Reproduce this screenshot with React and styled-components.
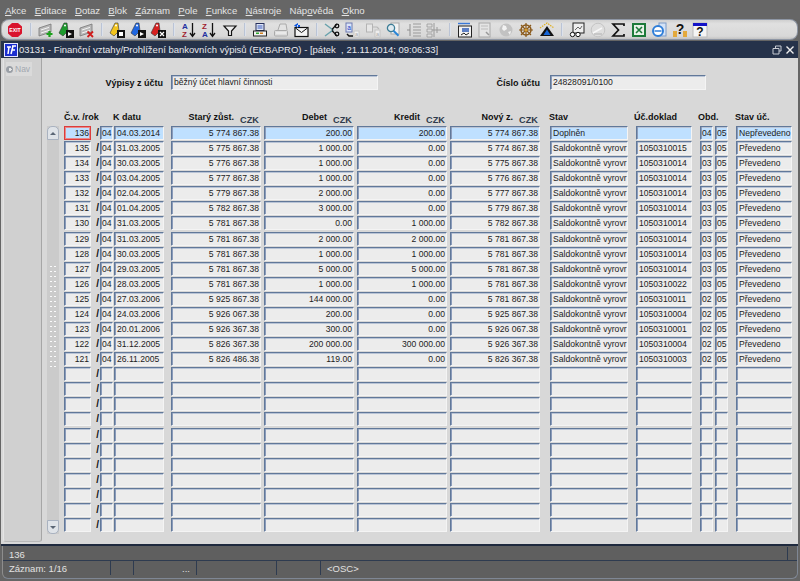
import React from 'react';
import styled, { createGlobalStyle } from 'styled-components';

const Global = createGlobalStyle`
html, body { margin: 0; padding: 0; background: #656565; }
* { box-sizing: border-box; }
`;

const Page = styled.div`
width: 800px;
height: 581px;
overflow: hidden;
display: flex;
flex-direction: column;
font-family: 'Liberation Sans', Arial, sans-serif;
background: #656565;
`;

const MenuBar = styled.div`
height: 19px;
flex: none;
display: flex;
align-items: center;
padding: 1px 0 0 5px;
gap: 8.3px;
font-size: 9.6px;
color: #e4e4e4;
background: #666;
u { text-decoration-thickness: 1px; }
`;

const Toolbar = styled.div`
height: 21px;
flex: none;
margin: 0 2px 0 1px;
padding-left: 3px;
display: flex;
align-items: center;
background: linear-gradient(#cfcfcf, #e0e0e0 20%, #d8d8d8 85%, #c2c2c2);
border: 1px solid #8e96a4;
border-left-color: #aaa;
border-radius: 8px;
`;

const Slot = styled.div`
width: 20.5px;
height: 18px;
flex: none;
display: flex;
align-items: center;
justify-content: center;
`;

const Sep = styled.div`
width: 10px;
height: 13px;
flex: none;
position: relative;
&::after {
  content: '';
  position: absolute;
  left: 4px;
  top: 0;
  bottom: 0;
  width: 2px;
  background: linear-gradient(90deg, #a9b5cb, #eef1f6);
}
`;

const Window = styled.div`
height: 505px;
flex: none;
margin: 1px 2px 0 1px;
display: flex;
flex-direction: column;
background: #d8d8d8;
border-bottom: 2px solid #1f2a3e;
`;

const TitleBar = styled.div`
height: 17px;
flex: none;
display: flex;
align-items: center;
padding: 0 2px 0 3px;
color: #e8e8ec;
font-size: 9.5px;
background: #25324a;
`;

const TitleText = styled.span`
margin-left: 1px;
flex: 1;
white-space: pre;
`;

const WinBtn = styled.span`
width: 12px;
height: 12px;
display: flex;
align-items: center;
justify-content: center;
margin-left: 1px;
`;

const Body = styled.div`
flex: 1;
display: flex;
min-height: 0;
`;

const NavPanel = styled.div`
width: 39px;
flex: none;
margin: 0 0 2px 2px;
padding: 4px 0 0 2px;
background: #d0d0d0;
border-right: 1px solid #a6a6a6;
border-bottom: 1px solid #b8b8b8;
border-left: 1px solid #e4e4e4;
border-radius: 0 0 3px 3px;
`;

const NavTab = styled.div`
width: 26px;
height: 14px;
display: flex;
align-items: center;
gap: 2px;
font-size: 8.5px;
color: #a2a8b0;
background: #dadada;
`;

const NavDot = styled.span`
width: 7px;
height: 7px;
border-radius: 50%;
background: radial-gradient(circle at 60% 50%, #e6e6e6 25%, #9a9fa6 30%);
`;

const Main = styled.div`
flex: 1;
min-width: 0;
padding-top: 17px;
`;

const FormRow = styled.div`
display: flex;
align-items: center;
height: 15px;
`;

const FormLabel = styled.div`
width: ${p => p.$w}px;
flex: none;
text-align: right;
font-size: 9px;
font-weight: 700;
color: #111;
margin-right: ${p => p.$gap}px;
`;

const Field = styled.div`
height: ${p => p.$h || 14}px;
width: ${p => p.$w}px;
margin-left: ${p => p.$ml || 0}px;
flex: none;
overflow: hidden;
white-space: nowrap;
padding: 1px ${p => (p.$right ? 1 : 0)}px 0 ${p => (p.$tight ? 1 : 2)}px;
line-height: 11px;
font-size: 8.6px;
color: #1c1c1c;
text-align: ${p => (p.$right ? 'right' : 'left')};
background: ${p => (p.$active ? '#bfe0ff' : '#ececec')};
border-style: solid;
border-width: 1px;
border-color: ${p => (p.$focus ? '#dc3c3c' : '#617899 #f4f4f4 #f4f4f4 #617899')};
box-shadow: ${p => (p.$focus ? 'inset 0 0 0 1px #e88a8a' : 'inset 1px 0 #8a9bba, inset 0 1px #b9c4d6')};
`;

const TableArea = styled.div`
display: flex;
margin: 20px 0 0 5px;
`;

const Scroller = styled.div`
width: 12px;
flex: none;
margin-top: 16px;
height: 408px;
display: flex;
flex-direction: column;
background: #cbcbcb;
`;

const ScrollBtn = styled.div`
height: 14px;
flex: none;
display: flex;
align-items: center;
justify-content: center;
background: #dfe3e8;
border: 1px solid #a9b2c0;
border-radius: ${p => (p.$down ? '0 0 5px 5px' : '5px 5px 0 0')};
&::after {
  content: '';
  border-left: 3px solid transparent;
  border-right: 3px solid transparent;
  ${p => (p.$down ? 'border-top: 3px solid #5b6675;' : 'border-bottom: 3px solid #5b6675;')}
}
`;

const Thumb = styled.div`
flex: 1;
position: relative;
`;

const Grip = styled.div`
position: absolute;
left: 2px;
right: 2px;
top: 124px;
height: 106px;
background-image: radial-gradient(circle, #fafafa 0.8px, transparent 1px);
background-size: 4px 5px;
`;

const Table = styled.div`
margin-left: 5px;
`;

const HeadRow = styled.div`
display: flex;
height: 16px;
`;

const Head = styled.div`
width: ${p => p.$w}px;
margin-left: ${p => p.$ml || 0}px;
flex: none;
display: flex;
justify-content: ${p => (p.$money ? 'flex-end' : 'flex-start')};
gap: 6px;
padding-right: ${p => (p.$money ? 1 : 0)}px;
font-size: 9px;
font-weight: 700;
color: #111;
white-space: nowrap;
line-height: 12px;
padding-top: 1px;
`;

const Czk = styled.span`
color: #2f3b4c;
padding-top: 3px;
font-size: 9.2px;
`;

const Rows = styled.div`
display: flex;
flex-direction: column;
gap: 1.08px;
`;

const Row = styled.div`
display: flex;
height: 14px;
`;

const Slash = styled.div`
width: 9px;
flex: none;
text-align: right;
padding-right: 1px;
font-size: 10px;
line-height: 13px;
font-weight: 700;
color: #111;
`;

const StatusBar = styled.div`
height: 33px;
flex: none;
margin: 0 2px 3px 2px;
border: 1px solid #7f8794;
border-top: none;
border-radius: 0 0 6px 6px;
border-left-color: #8d8d8d;
background: #5f5f5f;
color: #e2e2e2;
font-size: 9.5px;
display: flex;
flex-direction: column;
`;

const StatusTop = styled.div`
height: 15px;
padding: 2px 0 0 6px;
line-height: 13px;
position: relative;
border-bottom: 1px solid #2e3b50;
&::after {
  content: '';
  position: absolute;
  right: 9px;
  top: 1px;
  bottom: 0;
  width: 1px;
  background: #2e3b50;
}
`;

const StatusBottom = styled.div`
display: flex;
flex: 1;
`;

const Cell = styled.div`
width: ${p => p.$w}px;
flex: none;
padding-left: ${p => p.$pl || 0}px;
padding-top: 2px;
border-right: ${p => (p.$last ? 'none' : '1px solid #2e3b50')};
height: 14px;
line-height: 12px;
`;

const bank = (a, b, c, d) => [a, b, c, d];
const data = [
  ['136', '04.03.2014', ...bank('5 774 867.38', '200.00', '200.00', '5 774 867.38'), 'Doplněn', '', '04', 'Nepřevedeno'],
  ['135', '31.03.2005', ...bank('5 775 867.38', '1 000.00', '0.00', '5 774 867.38'), 'Saldokontně vyrovr', '1050310015', '03', 'Převedeno'],
  ['134', '30.03.2005', ...bank('5 776 867.38', '1 000.00', '0.00', '5 775 867.38'), 'Saldokontně vyrovr', '1050310014', '03', 'Převedeno'],
  ['133', '03.04.2005', ...bank('5 777 867.38', '1 000.00', '0.00', '5 776 867.38'), 'Saldokontně vyrovr', '1050310014', '03', 'Převedeno'],
  ['132', '02.04.2005', ...bank('5 779 867.38', '2 000.00', '0.00', '5 777 867.38'), 'Saldokontně vyrovr', '1050310014', '03', 'Převedeno'],
  ['131', '01.04.2005', ...bank('5 782 867.38', '3 000.00', '0.00', '5 779 867.38'), 'Saldokontně vyrovr', '1050310014', '03', 'Převedeno'],
  ['130', '31.03.2005', ...bank('5 781 867.38', '0.00', '1 000.00', '5 782 867.38'), 'Saldokontně vyrovr', '1050310014', '03', 'Převedeno'],
  ['129', '31.03.2005', ...bank('5 781 867.38', '2 000.00', '2 000.00', '5 781 867.38'), 'Saldokontně vyrovr', '1050310014', '03', 'Převedeno'],
  ['128', '30.03.2005', ...bank('5 781 867.38', '1 000.00', '1 000.00', '5 781 867.38'), 'Saldokontně vyrovr', '1050310014', '03', 'Převedeno'],
  ['127', '29.03.2005', ...bank('5 781 867.38', '5 000.00', '5 000.00', '5 781 867.38'), 'Saldokontně vyrovr', '1050310014', '03', 'Převedeno'],
  ['126', '28.03.2005', ...bank('5 781 867.38', '1 000.00', '1 000.00', '5 781 867.38'), 'Saldokontně vyrovr', '1050310022', '03', 'Převedeno'],
  ['125', '27.03.2006', ...bank('5 925 867.38', '144 000.00', '0.00', '5 781 867.38'), 'Saldokontně vyrovr', '1050310011', '02', 'Převedeno'],
  ['124', '24.03.2006', ...bank('5 926 067.38', '200.00', '0.00', '5 925 867.38'), 'Saldokontně vyrovr', '1050310004', '02', 'Převedeno'],
  ['123', '20.01.2006', ...bank('5 926 367.38', '300.00', '0.00', '5 926 067.38'), 'Saldokontně vyrovr', '1050310001', '02', 'Převedeno'],
  ['122', '31.12.2005', ...bank('5 826 367.38', '200 000.00', '300 000.00', '5 926 367.38'), 'Saldokontně vyrovr', '1050310004', '02', 'Převedeno'],
  ['121', '26.11.2005', ...bank('5 826 486.38', '119.00', '0.00', '5 826 367.38'), 'Saldokontně vyrovr', '1050310003', '02', 'Převedeno'],
];

const rows = [...data, ...Array.from({ length: 11 }, () => null)];

const Svg = ({ children, w = 16 }) => (
  <svg width={w} height="16" viewBox="0 0 16 16">{children}</svg>
);

const Card = ({ fill = '#b9b9b9', line = '#777' }) => (
  <>
    <polygon points="1,6 13,2 13,10 1,14" fill={fill} stroke={line} strokeWidth="0.8" />
    <path d="M3 8 L11 5.4 M3 11 L11 8.4" stroke="#f4f4f4" strokeWidth="1" />
  </>
);

const Tag = ({ fill }) => (
  <>
    <polygon points="1,11 6,1 9,1 10,9 5,14" fill={fill} stroke="#333" strokeWidth="0.6" />
    <circle cx="7" cy="3.5" r="1" fill="#fff" />
  </>
);

const BlackBox = ({ children }) => (
  <>
    <rect x="8" y="8" width="8" height="8" fill="#111" />
    {children}
  </>
);

const icons = {
  exit: (
    <Svg>
      <polygon points="5,1 11,1 15,4.5 15,11.5 11,15 5,15 1,11.5 1,4.5" fill="#d9142c" />
      <text x="8" y="10" fontSize="5.2" fontWeight="700" textAnchor="middle" fill="#fff">EXIT</text>
    </Svg>
  ),
  add: <Svg><Card /><path d="M11.5 9v6M8.5 12h6" stroke="#1ca01c" strokeWidth="2.2" /></Svg>,
  unlock: <Svg><Tag fill="#1d9a2e" /><BlackBox><path d="M10 14v-4l4 2z" fill="#fff" /></BlackBox></Svg>,
  del: <Svg><Card /><path d="M8.5 9.5l5.5 5.5M14 9.5L8.5 15" stroke="#d01c1c" strokeWidth="1.8" /></Svg>,
  yellow: <Svg><Tag fill="#f2c41e" /><BlackBox><rect x="10" y="10" width="4" height="4" fill="#fff" /></BlackBox></Svg>,
  blue: <Svg><Tag fill="#1f66e0" /><BlackBox><path d="M10 10l4 2-4 2z" fill="#fff" /></BlackBox></Svg>,
  red: <Svg><Tag fill="#d62020" /><BlackBox><path d="M10 10l4 4M14 10l-4 4" stroke="#fff" strokeWidth="1.2" /></BlackBox></Svg>,
  az: (
    <Svg>
      <text x="1" y="7" fontSize="8" fontWeight="700" fill="#2230a0">A</text>
      <text x="1" y="15" fontSize="8" fontWeight="700" fill="#a01c30">Z</text>
      <path d="M11.5 1v13M9 11l2.5 3.5 2.5-3.5" stroke="#111" strokeWidth="1.3" fill="none" />
    </Svg>
  ),
  za: (
    <Svg>
      <text x="1" y="7" fontSize="8" fontWeight="700" fill="#a01c30">Z</text>
      <text x="1" y="15" fontSize="8" fontWeight="700" fill="#2230a0">A</text>
      <path d="M11.5 1v13M9 11l2.5 3.5 2.5-3.5" stroke="#111" strokeWidth="1.3" fill="none" />
    </Svg>
  ),
  filter: <Svg><path d="M2 4h12L9.5 9v4.5h-3V9z" fill="#eee" stroke="#111" strokeWidth="1.2" /></Svg>,
  print: (
    <Svg>
      <rect x="4" y="1.5" width="8" height="7" fill="#dfe6f5" stroke="#26305e" />
      <path d="M5.5 4h5M5.5 6h5" stroke="#3a5bc0" />
      <rect x="1.5" y="9" width="13" height="5" fill="#f1f1f1" stroke="#222" />
      <rect x="4" y="10.5" width="3" height="1.5" fill="#2faa2f" />
      <rect x="8" y="10.5" width="3" height="1.5" fill="#d08020" />
    </Svg>
  ),
  printOff: (
    <Svg>
      <path d="M5 8l2-6h6l1 6" fill="#e2e2e2" stroke="#aaa" />
      <rect x="1.5" y="8.5" width="13" height="5.5" rx="1" fill="#ddd" stroke="#aaa" />
      <path d="M3 11h10" stroke="#f6f6f6" />
    </Svg>
  ),
  mail: (
    <Svg>
      <rect x="2" y="5.5" width="13" height="9" fill="#f4f4f4" stroke="#111" strokeWidth="1.2" />
      <path d="M2.5 6l6 4.5 6-4.5" fill="none" stroke="#111" />
      <path d="M5 1L1 3.5 5 6zM4 3h3v2H4z" fill="#0b55e0" />
    </Svg>
  ),
  cut: (
    <Svg>
      <path d="M1 2l8 6-8 6" fill="none" stroke="#6aa3ad" strokeWidth="1.5" />
      <path d="M13 2L8 7.5M13 14L8 8.5" stroke="#111" strokeWidth="1.2" />
      <circle cx="13" cy="4" r="1.8" fill="none" stroke="#111" strokeWidth="1.3" />
      <circle cx="13" cy="12" r="1.8" fill="none" stroke="#111" strokeWidth="1.3" />
    </Svg>
  ),
  copy: (
    <Svg>
      <rect x="2" y="1" width="6" height="9" fill="#dce4fa" stroke="#6d7ab0" />
      <text x="5" y="8" fontSize="6.5" textAnchor="middle" fill="#2038c0">a</text>
      <path d="M3 12l2 2h4" fill="none" stroke="#111" strokeWidth="1.4" />
      <rect x="10" y="9" width="5" height="6" fill="#f1f1f1" stroke="#c8c8c8" />
      <text x="12.5" y="14" fontSize="5.5" textAnchor="middle" fill="#aaa">a</text>
    </Svg>
  ),
  paste: (
    <Svg>
      <rect x="1.5" y="2" width="6" height="8" fill="#e6e6e6" stroke="#b4b4b4" />
      <path d="M8 5h4l2 2" fill="none" stroke="#b8b8b8" strokeWidth="1.2" />
      <rect x="10" y="8" width="5" height="7" fill="#eee" stroke="#c4c4c4" />
      <text x="12.5" y="14" fontSize="5.5" textAnchor="middle" fill="#aaa">a</text>
    </Svg>
  ),
  find: (
    <Svg>
      <rect x="6" y="1" width="8" height="11" fill="#f2f2f2" stroke="#aaa" />
      <circle cx="6" cy="6" r="3.6" fill="#dfeaf0" stroke="#3c7d96" strokeWidth="1.3" />
      <path d="M8.5 8.8l5 5" stroke="#2a86d8" strokeWidth="2" />
    </Svg>
  ),
  list: (
    <Svg>
      <path d="M7 2h8M7 5h8M7 8h8M7 11h8M7 14h8" stroke="#9a9a9a" strokeWidth="1.2" />
      <path d="M4 2v12M1 8h3" stroke="#8f8f8f" />
    </Svg>
  ),
  tree: (
    <Svg>
      <path d="M1 2h5v3H1zM1 7h5v3H1zM1 12h5v3H1z" fill="#dedede" stroke="#9a9a9a" strokeWidth="0.8" />
      <path d="M8 1v14M6 8h9M11 5v6" stroke="#9a9a9a" strokeWidth="1" />
    </Svg>
  ),
  save: (
    <Svg>
      <rect x="1.5" y="4" width="13" height="11" fill="#f2f2f2" stroke="#222" />
      <path d="M1 1.5h12" stroke="#3a78d8" strokeWidth="1.4" />
      <rect x="5" y="6" width="7" height="4" fill="#5d7fc4" />
      <path d="M4 13l3-2 2 2 3-2" stroke="#222" fill="none" />
    </Svg>
  ),
  docOff: (
    <Svg>
      <rect x="2" y="1" width="11" height="14" fill="#e4e4e4" stroke="#a8a8a8" />
      <path d="M4 4h7M4 7h7" stroke="#bcbcbc" />
      <path d="M9 10l3 3" stroke="#999" strokeWidth="1.5" />
    </Svg>
  ),
  globe: (
    <Svg>
      <circle cx="8" cy="8" r="6.5" fill="#c2c2c2" />
      <path d="M5 3l3 1 1 3-3 2-2-2zM10 10l3-1-1 4z" fill="#f2f2f2" />
    </Svg>
  ),
  wheel: (
    <Svg>
      <circle cx="8" cy="8" r="5" fill="none" stroke="#8a5a1c" strokeWidth="1.5" />
      <path d="M8 1v14M1 8h14M3 3l10 10M13 3L3 13" stroke="#8a5a1c" strokeWidth="1.2" />
      <circle cx="8" cy="8" r="1.5" fill="#d9a030" />
    </Svg>
  ),
  peak: (
    <Svg>
      <path d="M1 14L8 4l7 10z" fill="#111" />
      <path d="M4.5 13L8 7.5l3.5 5.5z" fill="#1565d8" />
      <path d="M1 6l7-5 7 5" fill="none" stroke="#e0b020" strokeWidth="1.2" strokeDasharray="1.5 1" />
    </Svg>
  ),
  binoc: (
    <Svg>
      <rect x="4" y="1" width="11" height="10" fill="#efefef" stroke="#222" />
      <path d="M6 8l3-3 2 2 2-3" fill="none" stroke="#666" />
      <circle cx="3.5" cy="12.5" r="2.2" fill="#fff" stroke="#111" />
      <circle cx="9" cy="12.5" r="2.2" fill="#fff" stroke="#111" />
    </Svg>
  ),
  gauge: (
    <Svg>
      <circle cx="8" cy="8" r="6.8" fill="#dedede" stroke="#c4c4c4" />
      <path d="M3 11l9-5" stroke="#f8f8f8" strokeWidth="1.5" />
      <path d="M4 12h8" stroke="#b0b0b0" />
    </Svg>
  ),
  sigma: <Svg><path d="M14 4V2H3l5.5 6L3 14h11v-2" fill="none" stroke="#111" strokeWidth="1.7" /></Svg>,
  excel: (
    <Svg>
      <rect x="1" y="1" width="14" height="14" fill="#1d7a3a" />
      <rect x="3" y="3" width="10" height="10" fill="#e8f2e8" />
      <path d="M5 5l6 6M11 5l-6 6" stroke="#1d7a3a" strokeWidth="1.6" />
    </Svg>
  ),
  ie: (
    <Svg>
      <rect x="8" y="1" width="7" height="13" fill="#d5e3f6" stroke="#7b9ac6" />
      <circle cx="7" cy="9" r="5" fill="#fff" stroke="#2f7ed8" strokeWidth="2" />
      <path d="M3.5 9h7" stroke="#2f7ed8" strokeWidth="1.5" />
    </Svg>
  ),
  help: (
    <Svg>
      <rect x="1" y="9" width="4" height="6" fill="#e3a93c" />
      <rect x="11" y="9" width="4" height="6" fill="#e3a93c" />
      <text x="8" y="12" fontSize="14" fontWeight="700" textAnchor="middle" fill="#111">?</text>
    </Svg>
  ),
  about: (
    <Svg>
      <rect x="1" y="1" width="14" height="14" fill="#f5f5f5" stroke="#bbb" />
      <rect x="1" y="1" width="14" height="3" fill="#1414c8" />
      <text x="8" y="14" fontSize="12" fontWeight="700" textAnchor="middle" fill="#111">?</text>
    </Svg>
  ),
};

const toolbarGroups = [
  ['exit'],
  ['add', 'unlock', 'del'],
  ['yellow', 'blue', 'red'],
  ['az', 'za', 'filter'],
  ['print', 'printOff', 'mail'],
  ['cut', 'copy', 'paste', 'find', 'list', 'tree'],
  ['save', 'docOff', 'globe', 'wheel', 'peak'],
  ['binoc', 'gauge', 'sigma', 'excel', 'ie', 'help', 'about'],
];

const menus = [
  ['', 'A', 'kce'], ['', 'E', 'ditace'], ['', 'D', 'otaz'], ['', 'B', 'lok'], ['', 'Z', 'áznam'],
  ['', 'P', 'ole'], ['', 'F', 'unkce'], ['', 'N', 'ástroje'], ['Náp', 'o', 'věda'], ['', 'O', 'kno'],
];

const columns = {
  id: { $w: 27 },
  rok: { $w: 13, $tight: true },
  date: { $w: 50, $ml: 1 },
  old: { $w: 90, $ml: 7 },
  debit: { $w: 90, $ml: 3 },
  credit: { $w: 90, $ml: 3 },
  fresh: { $w: 90, $ml: 3 },
  state: { $w: 78, $ml: 10 },
  doc: { $w: 56, $ml: 8 },
  m1: { $w: 13, $ml: 8, $tight: true },
  m2: { $w: 13, $ml: 2, $tight: true },
  acc: { $w: 56, $ml: 8 },
};

const GridRow = ({ row, first }) => {
  const [id, date, old, debit, credit, fresh, state, doc, period, acc] = row || [];
  return (
    <Row>
      <Field {...columns.id} $right $active={first} $focus={first}>{id}</Field>
      <Slash>/</Slash>
      <Field {...columns.rok} $active={first}>{row && '04'}</Field>
      <Field {...columns.date} $active={first}>{date}</Field>
      <Field {...columns.old} $right $active={first}>{old}</Field>
      <Field {...columns.debit} $right $active={first}>{debit}</Field>
      <Field {...columns.credit} $right $active={first}>{credit}</Field>
      <Field {...columns.fresh} $right $active={first}>{fresh}</Field>
      <Field {...columns.state} $active={first}>{state}</Field>
      <Field {...columns.doc} $active={first}>{doc}</Field>
      <Field {...columns.m1} $active={first}>{period}</Field>
      <Field {...columns.m2} $active={first}>{row && '05'}</Field>
      <Field {...columns.acc} $active={first}>{acc}</Field>
    </Row>
  );
};

export default function App() {
  return (
    <Page>
      <Global />
      <MenuBar>
        {menus.map(([pre, key, rest]) => (
          <span key={pre + key + rest}>{pre}<u>{key}</u>{rest}</span>
        ))}
      </MenuBar>
      <Toolbar>
        {toolbarGroups.map((group, i) => (
          <React.Fragment key={group[0]}>
            {i > 0 && <Sep />}
            {group.map(name => <Slot key={name}>{icons[name]}</Slot>)}
          </React.Fragment>
        ))}
      </Toolbar>
      <Window>
        <TitleBar>
          <svg width="14" height="14" viewBox="0 0 14 14">
            <rect x="0.5" y="0.5" width="13" height="13" fill="#1c2fd0" stroke="#e6e6ff" />
            <path d="M3 4h4M5 4L4 11M8 3h4M9 3L7 11M8 7h3" stroke="#fff" strokeWidth="1.5" fill="none" />
          </svg>
          <TitleText>03131 - Finanční vztahy/Prohlížení bankovních výpisů (EKBAPRO) - [pátek  , 21.11.2014; 09:06:33]</TitleText>
          <WinBtn>
            <svg width="10" height="10" viewBox="0 0 10 10">
              <path d="M3.5 3V1h5.5v5H7M1 3.5h6v5.5H1z" fill="none" stroke="#c8ccd4" />
            </svg>
          </WinBtn>
          <WinBtn>
            <svg width="10" height="10" viewBox="0 0 10 10">
              <path d="M1.5 1.5l7 7M8.5 1.5l-7 7" stroke="#f0f0f0" strokeWidth="1.4" />
            </svg>
          </WinBtn>
        </TitleBar>
        <Body>
          <NavPanel>
            <NavTab><NavDot />Nav</NavTab>
          </NavPanel>
          <Main>
            <FormRow>
              <FormLabel $w={121} $gap={8}>Výpisy z účtu</FormLabel>
              <Field $w={207} $h={15}>běžný účet hlavní činnosti</Field>
              <FormLabel $w={162} $gap={10}>Číslo účtu</FormLabel>
              <Field $w={156} $h={15}>24828091/0100</Field>
            </FormRow>
            <TableArea>
              <Scroller>
                <ScrollBtn />
                <Thumb><Grip /></Thumb>
                <ScrollBtn $down />
              </Scroller>
              <Table>
                <HeadRow>
                  <Head $w={49}>Č.v. /rok</Head>
                  <Head $w={50} $ml={0}>K datu</Head>
                  <Head {...columns.old} $money>Starý zůst.<Czk>CZK</Czk></Head>
                  <Head {...columns.debit} $money>Debet<Czk>CZK</Czk></Head>
                  <Head {...columns.credit} $money>Kredit<Czk>CZK</Czk></Head>
                  <Head {...columns.fresh} $money>Nový z.<Czk>CZK</Czk></Head>
                  <Head {...columns.state}>Stav</Head>
                  <Head {...columns.doc} $ml={7}>Úč.doklad</Head>
                  <Head $w={28} $ml={8}>Obd.</Head>
                  <Head {...columns.acc} $ml={9}>Stav úč.</Head>
                </HeadRow>
                <Rows>
                  {rows.map((row, i) => <GridRow key={i} row={row} first={i === 0} />)}
                </Rows>
              </Table>
            </TableArea>
          </Main>
        </Body>
      </Window>
      <StatusBar>
        <StatusTop>136</StatusTop>
        <StatusBottom>
          <Cell $w={108} $pl={6}>Záznam: 1/16</Cell>
          <Cell $w={23} />
          <Cell $w={63} $pl={48}>...</Cell>
          <Cell $w={80} />
          <Cell $w={44} />
          <Cell $w={100} $pl={6} $last>&lt;OSC&gt;</Cell>
        </StatusBottom>
      </StatusBar>
    </Page>
  );
}
